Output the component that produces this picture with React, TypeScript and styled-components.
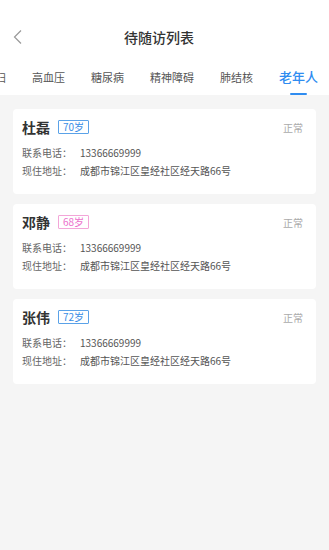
import React from 'react';
import styled, { createGlobalStyle } from 'styled-components';

const GlobalStyle = createGlobalStyle`
  html, body {
    margin: 0;
    padding: 0;
    background: #f5f5f5;
    font-family: "Noto Sans CJK SC", "Noto Sans", sans-serif;
  }
`;

const Page = styled.div`
  min-height: 550px;
  background: #f5f5f5;
`;

const Top = styled.header`
  background: #fff;
  padding-top: 20px;
`;

const TitleBar = styled.div`
  display: grid;
  grid-template-columns: 40px 1fr 51px;
  align-items: center;
  height: 34px;
`;

const Back = styled.div`
  display: flex;
  align-items: center;
  padding-left: 13px;
`;

const Title = styled.h1`
  margin: 0;
  text-align: center;
  font-size: 14px;
  font-weight: 500;
  color: #333;
  line-height: 20px;
`;

const TabBar = styled.nav`
  display: flex;
  justify-content: flex-end;
  gap: 26px;
  height: 41px;
  box-sizing: border-box;
  padding: 15px 11px 0 0;
  overflow: hidden;
`;

const Tab = styled.div<{ $active?: boolean }>`
  display: flex;
  flex-direction: column;
  align-items: center;
  flex-shrink: 0;
  font-size: ${p => (p.$active ? '13px' : '11px')};
  font-weight: ${p => (p.$active ? 500 : 400)};
  line-height: 16px;
  color: ${p => (p.$active ? '#2f8cf0' : '#555')};
  white-space: nowrap;
`;

const Underline = styled.span`
  width: 17px;
  height: 2px;
  margin-top: 8px;
  border-radius: 1px;
  background: #2f8cf0;
`;

const List = styled.main`
  display: flex;
  flex-direction: column;
  gap: 10px;
  padding: 14px 13px;
`;

const Card = styled.section`
  background: #fff;
  border-radius: 4px;
  padding: 8px 13px 14px 9px;
`;

const CardHead = styled.div`
  display: flex;
  align-items: center;
  height: 20px;
  margin-bottom: 7px;
`;

const Name = styled.span`
  font-size: 14px;
  font-weight: 700;
  color: #333;
  line-height: 20px;
`;

const Age = styled.span<{ $tone: 'blue' | 'pink' }>`
  display: inline-flex;
  align-items: center;
  height: 14px;
  box-sizing: border-box;
  margin-left: 8px;
  padding: 0 4px;
  border: 1px solid ${p => (p.$tone === 'pink' ? '#f3a6d8' : '#5aa2e8')};
  border-radius: 1px;
  font-size: 10px;
  line-height: 12px;
  color: ${p => (p.$tone === 'pink' ? '#ec6fcb' : '#3a8ee6')};
`;

const Status = styled.span`
  margin-left: auto;
  font-size: 10px;
  color: #aaa;
`;

const Row = styled.div`
  display: flex;
  font-size: 10px;
  line-height: 18px;
  color: #555;
`;

const Label = styled.span`
  width: 58px;
  flex-shrink: 0;
  color: #666;
`;

const tabs = ['孕产妇', '高血压', '糖尿病', '精神障碍', '肺结核', '老年人'];

const people: { name: string; age: number; tone: 'blue' | 'pink' }[] = [
  { name: '杜磊', age: 70, tone: 'blue' },
  { name: '邓静', age: 68, tone: 'pink' },
  { name: '张伟', age: 72, tone: 'blue' },
];

const App: React.FC = () => (
  <Page>
    <GlobalStyle />
    <Top>
      <TitleBar>
        <Back>
          <svg width="9" height="14" viewBox="0 0 9 14" fill="none">
            <polyline points="8,0.5 1.5,7 8,13.5" stroke="#999" strokeWidth="1.2" />
          </svg>
        </Back>
        <Title>待随访列表</Title>
        <span />
      </TitleBar>
      <TabBar>
        {tabs.map((t, i) => {
          const active = i === tabs.length - 1;
          return (
            <Tab key={t} $active={active}>
              {t}
              {active && <Underline />}
            </Tab>
          );
        })}
      </TabBar>
    </Top>
    <List>
      {people.map(p => (
        <Card key={p.name}>
          <CardHead>
            <Name>{p.name}</Name>
            <Age $tone={p.tone}>{p.age}岁</Age>
            <Status>正常</Status>
          </CardHead>
          <Row>
            <Label>联系电话：</Label>
            13366669999
          </Row>
          <Row>
            <Label>现住地址：</Label>
            成都市锦江区皇经社区经天路66号
          </Row>
        </Card>
      ))}
    </List>
  </Page>
);

export default App;
